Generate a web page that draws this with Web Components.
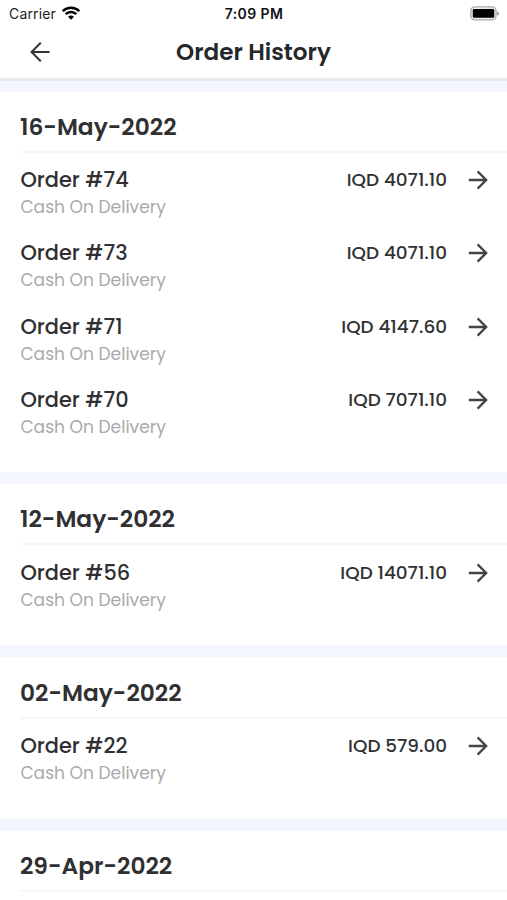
<!DOCTYPE html>
<html lang="en">
<head>
<meta charset="utf-8">
<title>Order History</title>
<style>
  body {
    margin: 0;
    height: 900px;
    overflow: hidden;
    background: #fff;
    color: #303032;
    font-family: Poppins, Inter, "Liberation Sans", sans-serif;
  }
</style>
</head>
<body>
<order-screen>
  <status-bar carrier="Carrier" time="7:09 PM"></status-bar>
  <page-header>Order History</page-header>
  <day-orders date="16-May-2022">
    <order-row number="74" price="IQD 4071.10"></order-row>
    <order-row number="73" price="IQD 4071.10"></order-row>
    <order-row number="71" price="IQD 4147.60"></order-row>
    <order-row number="70" price="IQD 7071.10"></order-row>
  </day-orders>
  <day-orders date="12-May-2022">
    <order-row number="56" price="IQD 14071.10"></order-row>
  </day-orders>
  <day-orders date="02-May-2022">
    <order-row number="22" price="IQD 579.00"></order-row>
  </day-orders>
  <day-orders date="29-Apr-2022"></day-orders>
</order-screen>

<script>
class OrderScreen extends HTMLElement {
  constructor() {
    super();
    this.attachShadow({mode: "open"});
    this.shadowRoot.innerHTML = `
      <style>
        :host {
          display: flex;
          flex-direction: column;
        }
      </style>
      <slot></slot>
    `;
  }
}

class StatusBar extends HTMLElement {
  constructor() {
    super();
    this.attachShadow({mode: "open"});
    this.shadowRoot.innerHTML = `
      <style>
        :host {
          display: grid;
          grid-template-columns: 1fr auto 1fr;
          align-items: center;
          box-sizing: border-box;
          height: 27px;
          padding: 0 8px 0 9px;
          font: 14px/20px Inter, sans-serif;
          color: #222;
        }
        .left {
          display: flex;
          align-items: center;
          gap: 6px;
          letter-spacing: .15px;
        }
        .time {
          font-weight: 600;
          letter-spacing: .4px;
          color: #111;
        }
        .battery {
          justify-self: end;
        }
        svg {
          display: block;
          margin-top: -1px;
        }
      </style>
      <div class="left">
        <span>${this.getAttribute("carrier")}</span>
        <svg width="18" height="14" viewBox="0 0 18 14" fill="none" stroke="#000" stroke-width="2.4">
          <path d="M.8 5.2a11.6 11.6 0 0 1 16.4 0M3.7 8.2a7.5 7.5 0 0 1 10.6 0"/>
          <path d="M9 13.7 6 10.7a4.2 4.2 0 0 1 6 0z" fill="#000" stroke="none"/>
        </svg>
      </div>
      <div class="time">${this.getAttribute("time")}</div>
      <svg class="battery" width="29" height="15" viewBox="0 0 29 15">
        <rect x=".8" y=".9" width="25.2" height="13" rx="4" fill="#eee" stroke="#aaa" stroke-width="1.3"/>
        <rect x="2.8" y="3" width="21.4" height="8.8" rx="1.2" fill="#000"/>
        <path d="M27 5.2q2 .7 2 2.2t-2 2.2z" fill="#999"/>
      </svg>
    `;
  }
}

class PageHeader extends HTMLElement {
  constructor() {
    super();
    this.attachShadow({mode: "open"});
    this.shadowRoot.innerHTML = `
      <style>
        :host {
          display: grid;
          grid-template-columns: 1fr auto 1fr;
          align-items: center;
          box-sizing: border-box;
          height: 54px;
          padding: 0 29px 1px;
          border-bottom: 3px solid #e9e9ed;
          font-size: 23.1px;
          line-height: 30px;
          font-weight: 600;
          color: #25282b;
        }
        svg {
          display: block;
        }
      </style>
      <svg width="22" height="22" viewBox="0 0 22 22" fill="none" stroke="#333" stroke-width="2">
        <path d="M20.5 11H2.5M11.8 1.7 2.5 11l9.3 9.3"/>
      </svg>
      <slot></slot>
    `;
  }
}

class DayOrders extends HTMLElement {
  constructor() {
    super();
    this.attachShadow({mode: "open"});
    this.shadowRoot.innerHTML = `
      <style>
        :host {
          display: block;
          --head-height: 61.4px;
          border-top: 12px solid #f3f6fe;
          padding-bottom: 26.7px;
        }
        :host(:first-of-type) {
          --head-height: 60.6px;
          border-top-width: 11px;
        }
        h2 {
          display: flex;
          align-items: end;
          box-sizing: border-box;
          height: var(--head-height);
          margin: 0 0 0 20px;
          padding-bottom: 8px;
          border-bottom: 2px solid #f7f7f8;
          font-size: 23.3px;
          line-height: 32px;
          font-weight: 600;
        }
      </style>
      <h2>${this.getAttribute("date")}</h2>
      <slot></slot>
    `;
  }
}

class OrderRow extends HTMLElement {
  constructor() {
    super();
    this.attachShadow({mode: "open"});
    this.shadowRoot.innerHTML = `
      <style>
        :host {
          display: flex;
          box-sizing: border-box;
          height: 73.2px;
          padding: 13.6px 19px 0 20.4px;
        }
        .info {
          flex: 1;
        }
        .name, .price {
          line-height: 28px;
          font-weight: 500;
        }
        .name {
          font-size: 20.9px;
        }
        .payment {
          font-size: 17.1px;
          line-height: 26px;
          color: #aaa;
        }
        .price {
          font-size: 18.4px;
          color: #2f3134;
        }
        svg {
          display: block;
          margin: 4px 0 0 21px;
        }
      </style>
      <div class="info">
        <div class="name">Order #${this.getAttribute("number")}</div>
        <div class="payment">Cash On Delivery</div>
      </div>
      <div class="price">${this.getAttribute("price")}</div>
      <svg width="20" height="20" viewBox="0 0 20 20" fill="none" stroke="#444" stroke-width="2.3">
        <path d="M.8 10h17.2M9.6 1.4l8.6 8.6-8.6 8.6"/>
      </svg>
    `;
  }
}

customElements.define("order-screen", OrderScreen);
customElements.define("status-bar", StatusBar);
customElements.define("page-header", PageHeader);
customElements.define("day-orders", DayOrders);
customElements.define("order-row", OrderRow);
</script>
</body>
</html>
